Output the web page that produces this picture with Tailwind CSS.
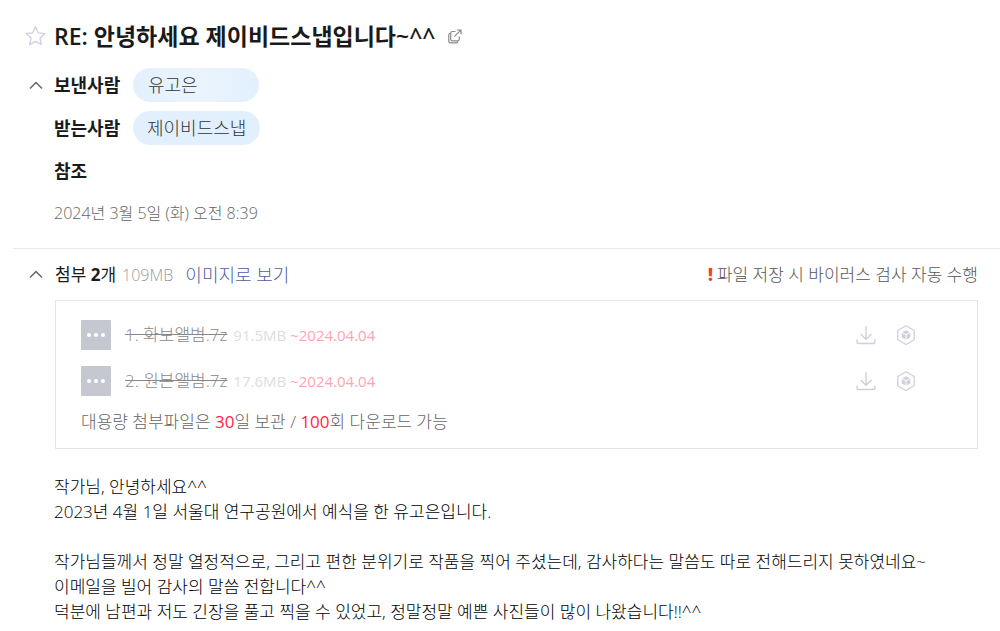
<!DOCTYPE html>
<html lang="ko">
<head>
    <meta charset="UTF-8">
    <meta name="viewport" content="width=device-width, initial-scale=1.0">
    <title>RE: 안녕하세요 제이비드스냅입니다~^^</title>
    <script src="https://cdn.jsdelivr.net/npm/@tailwindcss/browser@4"></script>
</head>
<body class="bg-white font-['Open_Sans','Noto_Sans_CJK_KR',sans-serif] font-light text-[#1a1a1a]">
    <main>
        <header class="ml-[13px] border-b border-[#ebebeb] pl-[11px] pt-5 pb-[23px]">
            <div class="flex h-8 items-center">
                <button type="button" aria-label="중요 표시" class="mr-2 shrink-0">
                    <svg class="size-[22px]" viewBox="0 0 22 22" fill="none" stroke="#cfcfe2" stroke-width="1.3" stroke-linejoin="round"><path d="M11.5 1.8l2.8 6 6.6.8-4.900 4.500 1.300 6.500-5.800-3.200-5.800 3.200L7 13.100 2.100 8.600l6.600-.8z"/></svg>
                </button>
                <h1 class="text-[23px] leading-8 font-semibold whitespace-nowrap">RE: 안녕하세요 제이비드스냅입니다~^^</h1>
                <a href="#" aria-label="새 창으로 보기" class="ml-3">
                    <svg class="size-[16px]" viewBox="0 0 16 16" fill="none" stroke="#8a8a8a" stroke-width="1.2"><path d="M8.500 3.500H5.200a1.500 1.500 0 0 0-1.500 1.500v6.300a1.500 1.500 0 0 0 1.500 1.500h5.600a1.500 1.500 0 0 0 1.500-1.500V8.500M3.700 5.300a1.600 1.600 0 0 0-1.900 1.500v6.200a1.900 1.900 0 0 0 1.900 1.900h5.600a1.700 1.700 0 0 0 1.500-1.200M9.800 2h4.200v4.200M13.800 2.200L7.300 8.700"/></svg>
                </a>
            </div>
            <dl class="mt-4 grid grid-cols-[30px_79px_1fr] items-center gap-y-[9px] text-lg leading-[34px]">
                <dt class="contents font-semibold">
                    <button type="button" aria-label="받는사람 접기" class="pl-[5px]">
                        <svg class="h-[9px] w-[14px]" viewBox="0 0 14 9" fill="none" stroke="#666" stroke-width="1.5"><path d="M1 7.500l6-6 6 6"/></svg>
                    </button>
                    <span class="leading-[34px]">보낸사람</span>
                </dt>
                <dd><a href="#" class="block h-[34px] w-[126px] rounded-full bg-linear-to-r from-[#e2f0fd] via-[#eaf4fe] to-[#e2f0fd] pl-[15px] text-[#333]">유고은</a></dd>
                <dt class="col-start-2 font-semibold">받는사람</dt>
                <dd><a href="#" class="block h-[34px] w-fit rounded-full bg-[#e2f0fd] px-[14px] text-[#333]">제이비드스냅</a></dd>
                <dt class="col-start-2 font-semibold">참조</dt>
                <dd></dd>
            </dl>
            <p class="mt-[13px] pl-[30px] text-base leading-6 text-[#666]">2024년 3월 5일 (화) 오전 8:39</p>
        </header>

        <section class="pr-[22px] pl-[29px]">
            <div class="flex h-[51px] items-center text-[17px]">
                <button type="button" aria-label="첨부 접기" class="mr-3">
                    <svg class="h-[9px] w-[14px]" viewBox="0 0 14 9" fill="none" stroke="#666" stroke-width="1.5"><path d="M1 7.500l6-6 6 6"/></svg>
                </button>
                <h2 class="font-normal">첨부 <strong>2</strong>개</h2>
                <span class="ml-[6px] text-base text-[#999]">109MB</span>
                <a href="#" class="ml-3 text-lg text-[#4f5da0]">이미지로 보기</a>
                <p class="ml-auto flex items-center gap-1 text-[#555]"><strong class="font-extrabold text-[#ff3b1f]">!</strong>파일 저장 시 바이러스 검사 자동 수행</p>
            </div>
            <div class="ml-[26px] border border-[#e5e5e5] px-[25px] pt-[11px] pb-2 text-[17px]">
                <ul>
                    <li class="flex h-[46px] items-center">
                        <svg class="mr-[14px] size-[30px]" viewBox="0 0 30 30"><rect width="30" height="30" rx="1" fill="#c5c8d1"/><g fill="#fff"><circle cx="8" cy="15" r="2"/><circle cx="15" cy="15" r="2"/><circle cx="22" cy="15" r="2"/></g></svg>
                        <span class="text-[#888] line-through">1. 화보앨범.7z</span>
                        <span class="ml-[6px] text-[15px] font-normal text-[#ddd]">91.5MB</span>
                        <span class="ml-1 text-[15px] font-normal text-[#ffa5b2]">~2024.04.04</span>
                        <button type="button" aria-label="다운로드" class="mr-5 ml-auto">
                            <svg class="size-5" viewBox="0 0 20 20" fill="none" stroke="#d0d0dc" stroke-width="1.4"><path d="M10 1v13M4.500 9l5.500 5.300L15.500 9M1 14.500v2.500a1.500 1.500 0 0 0 1.500 1.500h15a1.500 1.500 0 0 0 1.500-1.500v-2.500"/></svg>
                        </button>
                        <button type="button" aria-label="클라우드에 저장" class="mr-[36px]">
                            <svg class="size-5" viewBox="0 0 20 20"><path d="M10 .8l8.200 4.700v9.300L10 19.500l-8.200-4.700V5.500z" fill="none" stroke="#d0d0dc" stroke-width="1.3" stroke-linejoin="round"/><g fill="#d0d0d8"><path d="M10 5.300l3.700 1.900L10 9.200 6.300 7.200z"/><path d="M5.700 8.100l3.800 2v4.500l-3.800-2z"/><path d="M14.300 8.100l-3.800 2v4.500l3.800-2z"/></g></svg>
                        </button>
                    </li>
                    <li class="flex h-[46px] items-center">
                        <svg class="mr-[14px] size-[30px]" viewBox="0 0 30 30"><rect width="30" height="30" rx="1" fill="#c5c8d1"/><g fill="#fff"><circle cx="8" cy="15" r="2"/><circle cx="15" cy="15" r="2"/><circle cx="22" cy="15" r="2"/></g></svg>
                        <span class="text-[#888] line-through">2. 원본앨범.7z</span>
                        <span class="ml-[6px] text-[15px] font-normal text-[#ddd]">17.6MB</span>
                        <span class="ml-1 text-[15px] font-normal text-[#ffa5b2]">~2024.04.04</span>
                        <button type="button" aria-label="다운로드" class="mr-5 ml-auto">
                            <svg class="size-5" viewBox="0 0 20 20" fill="none" stroke="#d0d0dc" stroke-width="1.4"><path d="M10 1v13M4.500 9l5.500 5.300L15.500 9M1 14.500v2.500a1.500 1.500 0 0 0 1.500 1.500h15a1.500 1.500 0 0 0 1.500-1.500v-2.500"/></svg>
                        </button>
                        <button type="button" aria-label="클라우드에 저장" class="mr-[36px]">
                            <svg class="size-5" viewBox="0 0 20 20"><path d="M10 .8l8.200 4.700v9.300L10 19.500l-8.200-4.700V5.500z" fill="none" stroke="#d0d0dc" stroke-width="1.3" stroke-linejoin="round"/><g fill="#d0d0d8"><path d="M10 5.300l3.700 1.900L10 9.200 6.300 7.200z"/><path d="M5.700 8.100l3.800 2v4.500l-3.800-2z"/><path d="M14.300 8.100l-3.800 2v4.500l3.800-2z"/></g></svg>
                        </button>
                    </li>
                </ul>
                <p class="leading-9 text-[#666]">대용량 첨부파일은 <span class="font-normal text-[#ff1f43]">30</span>일 보관 / <span class="font-normal text-[#ff1f43]">100</span>회 다운로드 가능</p>
            </div>
        </section>

        <article class="pt-[25px] pl-[54px] text-[17px] leading-[25px] text-black">
            <p>작가님, 안녕하세요^^</p>
            <p>2023년 4월 1일 서울대 연구공원에서 예식을 한 유고은입니다.</p>
            <p><br></p>
            <p>작가님들께서 정말 열정적으로, 그리고 편한 분위기로 작품을 찍어 주셨는데, 감사하다는 말씀도 따로 전해드리지 못하였네요~</p>
            <p>이메일을 빌어 감사의 말씀 전합니다^^</p>
            <p>덕분에 남편과 저도 긴장을 풀고 찍을 수 있었고, 정말정말 예쁜 사진들이 많이 나왔습니다!!^^</p>
        </article>
    </main>
</body>
</html>
